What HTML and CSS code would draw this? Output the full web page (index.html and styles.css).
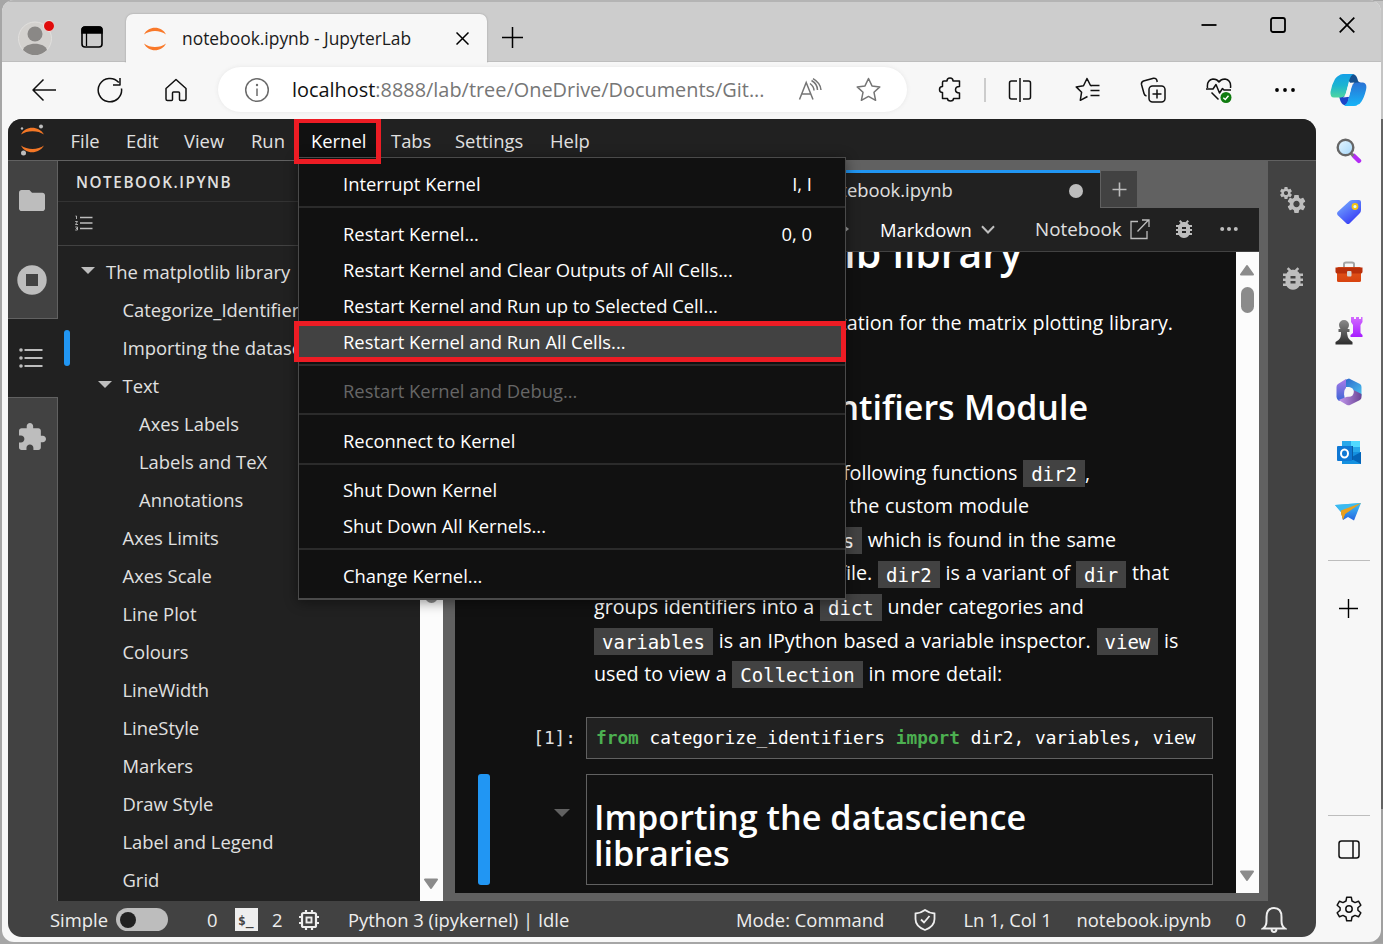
FILE: index.html
```html
<!DOCTYPE html>
<html lang="en">
<head>
<meta charset="utf-8">
<title>notebook.ipynb - JupyterLab</title>
<link rel="stylesheet" href="styles.css">
</head>
<body>
<svg width="0" height="0" class="defs" aria-hidden="true">
  <defs>
    <symbol id="gear" viewBox="2 2 20 20"><path d="M19.43 12.98c.04-.32.07-.64.07-.98s-.03-.66-.07-.98l2.11-1.65c.19-.15.24-.42.12-.64l-2-3.46c-.12-.22-.39-.3-.61-.22l-2.49 1c-.52-.4-1.08-.73-1.69-.98l-.38-2.65C14.46 2.18 14.25 2 14 2h-4c-.25 0-.46.18-.49.42l-.38 2.65c-.61.25-1.17.59-1.69.98l-2.49-1c-.23-.09-.49 0-.61.22l-2 3.46c-.13.22-.07.49.12.64l2.11 1.65c-.04.32-.07.65-.07.98s.03.66.07.98l-2.11 1.65c-.19.15-.24.42-.12.64l2 3.46c.12.22.39.3.61.22l2.49-1c.52.4 1.08.73 1.69.98l.38 2.65c.03.24.24.42.49.42h4c.25 0 .46-.18.49-.42l.38-2.65c.61-.25 1.17-.59 1.69-.98l2.49 1c.23.09.49 0 .61-.22l2-3.46c.12-.22.07-.49-.12-.64l-2.11-1.65zM12 15.5c-1.93 0-3.5-1.57-3.5-3.5s1.57-3.5 3.5-3.5 3.5 1.57 3.5 3.5-1.57 3.5-3.5 3.5z"/></symbol>
    <symbol id="bug" viewBox="4 3 16 18"><path d="M20 8h-2.81c-.45-.78-1.07-1.45-1.82-1.96L17 4.41 15.59 3l-2.17 2.17C12.96 5.06 12.49 5 12 5c-.49 0-.96.06-1.41.17L8.41 3 7 4.41l1.62 1.63C7.88 6.55 7.26 7.22 6.81 8H4v2h2.09c-.05.33-.09.66-.09 1v1H4v2h2v1c0 .34.04.67.09 1H4v2h2.81c1.04 1.79 2.97 3 5.19 3s4.15-1.21 5.19-3H20v-2h-2.09c.05-.33.09-.66.09-1v-1h2v-2h-2v-1c0-.34-.04-.67-.09-1H20V8zm-6 8h-4v-2h4v2zm0-4h-4v-2h4v2z"/></symbol>
    <linearGradient id="cpA" x1="0" y1="0" x2="0" y2="1"><stop offset="0" stop-color="#14a0e8"/><stop offset=".5" stop-color="#1cb5d0"/><stop offset="1" stop-color="#4fd6a0"/></linearGradient>
    <linearGradient id="cpB" x1="0" y1="0" x2="0" y2="1"><stop offset="0" stop-color="#2a72d4"/><stop offset="1" stop-color="#16b4f8"/></linearGradient>
    <linearGradient id="lens" x1="0" y1="0" x2="1" y2="1"><stop offset="0" stop-color="#e8f7ff"/><stop offset="1" stop-color="#a3d6fa"/></linearGradient>
    <linearGradient id="tag" x1="0" y1="0" x2=".7" y2="1"><stop offset="0" stop-color="#7db8ff"/><stop offset="1" stop-color="#3538f5"/></linearGradient>
    <linearGradient id="bag" x1="0" y1="0" x2="0" y2="1"><stop offset="0" stop-color="#e2561c"/><stop offset="1" stop-color="#d8430f"/></linearGradient>
    <linearGradient id="pawn" x1="0" y1="0" x2="0" y2="1"><stop offset="0" stop-color="#8a8a8a"/><stop offset="1" stop-color="#2c2c2c"/></linearGradient>
    <linearGradient id="rook" x1="0" y1="0" x2="0" y2="1"><stop offset="0" stop-color="#d36bff"/><stop offset="1" stop-color="#a61cff"/></linearGradient>
    <linearGradient id="m1" x1="0" y1="0" x2="1" y2="1"><stop offset="0" stop-color="#2a63c9"/><stop offset="1" stop-color="#4cc4f0"/></linearGradient>
    <linearGradient id="m2" x1="0" y1="0" x2="0" y2="1"><stop offset="0" stop-color="#ab7be8"/><stop offset="1" stop-color="#3a66d6"/></linearGradient>
    <linearGradient id="m3" x1="0" y1="0" x2="1" y2="0"><stop offset="0" stop-color="#c59af0"/><stop offset="1" stop-color="#6a4494"/></linearGradient>
    <linearGradient id="plane" x1="0" y1="0" x2="0" y2="1"><stop offset="0" stop-color="#3fc4f5"/><stop offset="1" stop-color="#2564e0"/></linearGradient>
  </defs>
</svg>
<div class="window">
  <header class="titlebar">
    <span class="avatar"><svg width="36" height="36" viewBox="0 0 36 36"><circle cx="17" cy="19.500" r="16.500" fill="#d3d1ce" stroke="#e0dfdd"/><circle cx="17" cy="15" r="7.500" fill="#8a8886"/><path d="M5 31C7 22.500 27 22.500 29 31C22 38 12 38 5 31Z" fill="#8a8886"/><circle cx="31" cy="7" r="5.500" fill="#e00b0b" stroke="#e8e8e8"/></svg></span>
    <span class="workspaces"><svg width="22" height="22" viewBox="0 0 22 22"><rect x="1" y="1" width="20" height="20" rx="3" fill="none" stroke="#000" stroke-width="1.600"/><path d="M1 7V3.500Q1 1 4 1H18Q21 1 21 3.500V7ZM5.500 7V20" stroke="#000" stroke-width="1.300"/></svg></span>
    <div class="browser-tab">
      <svg class="favicon" width="24" height="24" viewBox="0 0 24 24" fill="#f9792a"><path d="M1 7.500C5-1.500 19-1.500 23 7.500C17 2.800 7 2.800 1 7.500ZM1 16.500C5 25.500 19 25.500 23 16.500C17 21.200 7 21.200 1 16.500Z"/></svg>
      <span class="tab-name">notebook.ipynb - JupyterLab</span>
      <svg width="13" height="13" viewBox="0 0 13 13"><path d="M.5.500 12.500 12.500M12.500.500.500 12.500" stroke="#000" stroke-width="1.500"/></svg>
    </div>
    <svg class="new-tab" width="21" height="21" viewBox="0 0 21 21"><path d="M10.500 0V21M0 10.500H21" stroke="#000" stroke-width="1.500"/></svg>
    <div class="window-buttons">
      <svg width="16" height="16" viewBox="0 0 16 16"><path d="M.5 8H15.500" stroke="#000" stroke-width="1.800"/></svg>
      <svg width="16" height="16" viewBox="0 0 16 16"><rect x="1" y="1" width="14" height="14" rx="2" fill="none" stroke="#000" stroke-width="1.800"/></svg>
      <svg width="16" height="16" viewBox="0 0 16 16"><path d="M.7.700 15.300 15.300M15.300.700.700 15.300" stroke="#000" stroke-width="1.700"/></svg>
    </div>
  </header>

  <nav class="toolbar">
    <span class="slot"><svg width="26" height="24" viewBox="0 0 26 24"><path d="M25 12H2M12.500 1.500 2 12 12.500 22.500" class="ln"/></svg></span>
    <span class="slot"><svg width="26" height="26" viewBox="0 0 26 26"><path d="M24.500 11.500A11.700 11.700 0 1 1 21.800 5.500M23 1V8H16" class="ln"/></svg></span>
    <span class="slot"><svg width="24" height="24" viewBox="0 0 24 24"><path d="M2 10.500 12 1.500 22 10.500V21Q22 22.500 20.500 22.500H16.500Q15.500 22.500 15.500 21.500V15Q15.500 14 14.500 14H9.500Q8.500 14 8.500 15V21.500Q8.500 22.500 7.500 22.500H3.500Q2 22.500 2 21Z" class="ln"/></svg></span>
    <div class="address">
      <svg width="26" height="26" viewBox="0 0 26 26"><g fill="none" stroke="#6b6b6b" stroke-width="1.500"><circle cx="13" cy="13" r="11.300"/><path d="M13 11.500V19"/></g><circle cx="13" cy="8" r="1.200" fill="#6b6b6b"/></svg>
      <span class="url"><b>localhost</b>:8888/lab/tree/OneDrive/Documents/Git...</span>
      <svg class="read" width="24" height="23" viewBox="0 0 24 23"><g fill="none" stroke="#757575" stroke-width="1.500"><path d="M1.500 21.500 8.200 4.500 15 21.500M4 16H12.500M12 5.500Q16 8.500 16 12.500M13.500 2.500Q19.500 6 19.500 12M15 .7Q22.500 5 23 12"/></g></svg>
      <svg class="star" width="25" height="25" viewBox="0 0 25 25"><path d="M12.500 1.500 16 8.900 23.800 9.900 18 15.300 19.600 23.300 12.500 19.400 5.400 23.300 7 15.300 1.200 9.900 9 8.900Z" fill="none" stroke="#757575" stroke-width="1.500" stroke-linejoin="round"/></svg>
    </div>
    <span class="slot"><svg width="24" height="25" viewBox="0 0 24 25"><path d="M6 4H9Q9 1 12 1T15 4H21.500V9.500Q17.500 9.500 17.500 12.700T21.500 16V21.500H15.500Q15.500 24 12.500 24T9.500 21.500H4.500V15.500Q1.500 15.500 1.500 12.500T4.500 9.500V5.500Q4.500 4 6 4Z" class="ln"/></svg></span>
    <i class="divider"></i>
    <span class="slot"><svg width="24" height="24" viewBox="0 0 24 24"><path d="M9 3H3.500Q1.500 3 1.500 5V19Q1.500 21 3.500 21H9M15 3H20.500Q22.500 3 22.500 5V19Q22.500 21 20.500 21H15M12 0V24" class="ln"/></svg></span>
    <span class="slot after"><svg width="25" height="25" viewBox="0 0 25 25"><path d="M17 8.800 15.500 8.500 12 1.500 8.500 8.800 1.200 9.900 6.600 15.200 5.300 23.300 12.500 19.500M15.500 8.500H24.500M15.500 13.500H24.500M15.500 18.500H24.500" class="ln"/></svg></span>
    <span class="slot"><svg width="26" height="26" viewBox="0 0 26 26"><path d="M6.500 19Q4.500 18.500 4 16.500L1.500 7.500Q1 5 3.500 4L13.500 1.300Q16 1 16.800 3L17.200 5" class="ln"/><rect x="9" y="9" width="16" height="16" rx="3.500" class="ln"/><path d="M17 12.500V21.500M12.500 17H21.500" class="ln"/></svg></span>
    <span class="slot"><svg width="26" height="26" viewBox="0 0 26 26"><path d="M1.500 11Q.5 3 7 2Q11 2 13 5Q15 2 19 2Q25.500 3 24.500 11M0 12H7L10 7.500 13.500 16 16.500 11.500 18 13H25M5.500 15.500 12.500 22.500" class="ln"/><circle cx="20" cy="20.500" r="5.500" fill="#107c10"/><path d="M17.300 20.700 19.300 22.500 22.500 18.800" fill="none" stroke="#fff" stroke-width="1.400"/></svg></span>
    <span class="slot"><svg width="22" height="6" viewBox="0 0 22 6"><circle cx="3" cy="3" r="1.900"/><circle cx="11" cy="3" r="1.900"/><circle cx="19" cy="3" r="1.900"/></svg></span>
    <span class="copilot"><svg width="37" height="34" viewBox="0 0 37 34"><path d="M20 1H22Q26 1 27.500 6Q28 9.500 31 9.500L22 12 18 7Z" fill="#15508f"/><path d="M9 22 19 24Q18 33 14 32Q11 31 9.500 25Z" fill="#1b45c8"/><path d="M9 2.500Q10 1 13 1H24Q20.500 2 19 8L16 20Q15 24 11 24.500H4Q0 24.500 .500 19Q1.500 12 5 6Q7 3 9 2.500Z" fill="url(#cpA)"/><path d="M28 31.500Q26.500 33 24 33H14Q17 31 18.500 26L21.500 14Q23 9.500 27 9.500H33Q37.500 10.500 36 17Q34 25 31.500 28.500Q30 31 28 31.500Z" fill="url(#cpB)"/><path d="M18.800 10.500Q20 9.500 24.500 9.500Q22.300 11 21.500 14L19.500 22Q18.500 24.500 13 24.500Q15.500 23 16 20Z" fill="#f7f7f7"/></svg></span>
  </nav>

  <div class="page">
    <main class="lab">
      <nav class="menubar">
        <span class="logo"><svg width="28" height="34" viewBox="0 0 28 34"><path d="M2 11.500C6 2.500 20 2.500 25 11.500C19 7 8 7 2 11.500ZM2 22.500C6 31.500 20 31.500 25 22.500C19 27 8 27 2 22.500Z" fill="#f37726"/><circle cx="22" cy="3.500" r="2" fill="#bdbdbd"/><circle cx="3" cy="5.500" r="1.200" fill="#bdbdbd"/><circle cx="4.500" cy="30" r="2.500" fill="#bdbdbd"/></svg></span>
        <span>File</span><span>Edit</span><span>View</span><span>Run</span>
        <div class="kernel">Kernel
          <i class="mark mark-menu"></i>
          <div class="dropdown">
            <p>Interrupt Kernel<kbd>I, I</kbd></p>
            <hr>
            <p>Restart Kernel...<kbd>0, 0</kbd></p>
            <p>Restart Kernel and Clear Outputs of All Cells...</p>
            <p>Restart Kernel and Run up to Selected Cell...</p>
            <p class="hot">Restart Kernel and Run All Cells...<i class="mark mark-item"></i></p>
            <hr>
            <p class="off">Restart Kernel and Debug...</p>
            <hr>
            <p>Reconnect to Kernel</p>
            <hr>
            <p>Shut Down Kernel</p>
            <p>Shut Down All Kernels...</p>
            <hr>
            <p>Change Kernel...</p>
          </div>
        </div>
        <span>Tabs</span><span>Settings</span><span>Help</span>
      </nav>

      <div class="workbench">
        <aside class="activity">
          <span><svg width="26" height="21" viewBox="2 4 20 16" preserveAspectRatio="none"><path d="M10 4H4c-1.100 0-1.990.900-1.990 2L2 18c0 1.100.900 2 2 2h16c1.100 0 2-.900 2-2V8c0-1.100-.900-2-2-2h-8l-2-2z"/></svg></span>
          <span><svg width="30" height="30" viewBox="0 0 30 30"><circle cx="15" cy="15" r="14.700"/><path d="M9 9H21V21H9Z" fill="#424242"/></svg></span>
          <span class="active"><svg width="24" height="20" viewBox="0 0 24 20"><path d="M5.500 1H23.500V3H5.500ZM5.500 9H23.500V11H5.500ZM5.500 17H23.500V19H5.500Z"/><circle cx="2" cy="2" r="1.800"/><circle cx="2" cy="10" r="1.800"/><circle cx="2" cy="18" r="1.800"/></svg></span>
          <span><svg width="27" height="27" viewBox="2 1 21 21"><path d="M20.500 11H19V7c0-1.100-.900-2-2-2h-4V3.500C13 2.120 11.880 1 10.500 1S8 2.120 8 3.500V5H4c-1.100 0-1.990.900-1.990 2v3.800H3.500c1.490 0 2.700 1.210 2.700 2.700s-1.210 2.700-2.700 2.700H2V20c0 1.100.900 2 2 2h3.800v-1.500c0-1.490 1.210-2.700 2.700-2.700 1.490 0 2.700 1.210 2.700 2.700V22H17c1.100 0 2-.900 2-2v-4h1.500c1.380 0 2.500-1.120 2.500-2.500S21.880 11 20.500 11z"/></svg></span>
        </aside>
        <section class="toc">
          <h2>NOTEBOOK.IPYNB</h2>
          <div class="toc-tools"><svg width="18" height="16" viewBox="0 0 18 16" fill="none" stroke="#bdbdbd"><path d="M5 2.500H17.500M5 8H17.500M5 13.500H17.500" stroke-width="1.700"/><path d="M.5 1H1.500V4M.2 6.500H2.500L.5 9.500H3M.2 12H2.500V15H.200M1 13.500H2.500" stroke-width=".9"/></svg></div>
          <div class="toc-body">
            <ul>
              <li class="l0"><i class="caret"></i>The matplotlib library</li>
              <li class="l1">Categorize_Identifiers Module</li>
              <li class="l1 current">Importing the datascience libraries</li>
              <li class="l1"><i class="caret"></i>Text</li>
              <li class="l2">Axes Labels</li>
              <li class="l2">Labels and TeX</li>
              <li class="l2">Annotations</li>
              <li class="l1">Axes Limits</li>
              <li class="l1">Axes Scale</li>
              <li class="l1">Line Plot</li>
              <li class="l1">Colours</li>
              <li class="l1">LineWidth</li>
              <li class="l1">LineStyle</li>
              <li class="l1">Markers</li>
              <li class="l1">Draw Style</li>
              <li class="l1">Label and Legend</li>
              <li class="l1">Grid</li>
            </ul>
            <div class="scroll toc-scroll"><i class="thumb"></i><svg width="16" height="12" viewBox="0 0 16 12"><path d="M2 1.500H14L8 10Z" stroke="#8b8b8b" stroke-width="2" stroke-linejoin="round"/></svg></div>
          </div>
        </section>

        <section class="dock">
          <div class="doc-tabs">
            <div class="doc-tab"><span>notebook.ipynb</span><i></i></div>
            <div class="add"><svg width="15" height="15" viewBox="0 0 15 15"><path d="M7.500.500V14.500M.5 7.500H14.500" stroke="#bdbdbd" stroke-width="1.600"/></svg></div>
          </div>
          <div class="doc-tools">
            <svg class="run-all" width="7" height="8" viewBox="0 0 7 8"><path d="M1 0 6 4 1 8Z" fill="#9e9e9e"/></svg>
            <span class="cell-type">Markdown</span>
            <svg class="chev" width="14" height="9" viewBox="0 0 14 9"><path d="M1 1.200 7 7.500 13 1.200" fill="none" stroke="#bdbdbd" stroke-width="2"/></svg>
            <span class="open-nb">Notebook</span>
            <svg class="ext" width="21" height="21" viewBox="0 0 21 21"><path d="M9 2.500H2V19.500H18V12M8.500 12.500 19.500 1M13 1H20V8" fill="none" stroke="#bdbdbd" stroke-width="1.300"/></svg>
            <svg class="bug" width="16" height="18" fill="#bdbdbd"><use href="#bug"/></svg>
            <svg class="more" width="18" height="6" viewBox="0 0 18 6" fill="#bdbdbd"><circle cx="2.200" cy="3" r="2"/><circle cx="9" cy="3" r="2"/><circle cx="15.800" cy="3" r="2"/></svg>
          </div>
          <div class="doc-body">
            <article>
              <div class="rendered">
                <h1 class="w428">The matplotlib library</h1>
                <p class="w579 intro">documentation for the matrix plotting library.</p>
                <h3 class="w494">Categorize_Identifiers Module</h3>
                <p class="w496">The following functions <code>dir2</code>,</p>
                <p class="w435">from the custom module</p>
                <p class="w522"><code>identifiers</code> which is found in the same</p>
                <p class="w575">as this file. <code>dir2</code> is a variant of <code>dir</code> that</p>
                <p>groups identifiers into a <code>dict</code> under categories and</p>
                <p><code>variables</code> is an IPython based a variable inspector. <code>view</code> is</p>
                <p>used to view a <code>Collection</code> in more detail:</p>
              </div>
              <div class="cell">
                <span class="prompt">[1]:</span>
                <pre><b>from</b> categorize_identifiers <b>import</b> dir2, variables, view</pre>
              </div>
              <div class="cell selected">
                <i class="bar"></i>
                <span class="prompt"><i class="caret"></i></span>
                <h3>Importing the datascience<br>libraries</h3>
              </div>
            </article>
            <div class="scroll doc-scroll">
              <svg width="16" height="12" viewBox="0 0 16 12"><path d="M2 10.500H14L8 2Z" stroke="#8b8b8b" stroke-width="2" stroke-linejoin="round"/></svg>
              <i class="thumb"></i>
              <svg class="down" width="16" height="12" viewBox="0 0 16 12"><path d="M2 1.500H14L8 10Z" stroke="#8b8b8b" stroke-width="2" stroke-linejoin="round"/></svg>
            </div>
          </div>
        </section>
        <aside class="inspector">
          <svg width="26" height="26" viewBox="0 0 26 26"><use href="#gear" x="0" y="0" width="12" height="12"/><use href="#gear" x="7.500" y="8" width="18" height="18"/></svg>
          <svg width="20" height="23"><use href="#bug"/></svg>
        </aside>
      </div>

      <footer class="status">
        <span>Simple</span>
        <i class="toggle"></i>
        <span>0</span>
        <svg width="23" height="23" viewBox="0 0 23 23"><path d="M0 0H23V23H0Z" fill="#eee"/><text x="3" y="17" class="term">$_</text></svg>
        <span>2</span>
        <svg width="22" height="22" viewBox="0 0 22 22" fill="none" stroke="#eee"><rect x="4" y="4" width="14" height="14" rx="1.500" stroke-width="2.200"/><rect x="8.500" y="8.500" width="5" height="5" stroke-width="1.900"/><path d="M8 1V4M14 1V4M8 18V21M14 18V21M1 8H4M1 14H4M18 8H21M18 14H21" stroke-width="2.200"/></svg>
        <span>Python 3 (ipykernel) | Idle</span>
        <span>Mode: Command</span>
        <svg width="22" height="22" viewBox="0 0 22 22" fill="none" stroke="#eee" stroke-width="1.800"><path d="M11 1Q15 4 20.500 4.500V10Q20.500 17.500 11 21Q1.500 17.500 1.500 10V4.500Q7 4 11 1Z"/><path d="M7 10.500 10 13.500 15.500 7"/></svg>
        <span>Ln 1, Col 1</span>
        <span>notebook.ipynb</span>
        <span>0</span>
        <svg width="26" height="28" viewBox="0 0 26 28" fill="none" stroke="#eee" stroke-width="2"><path d="M2 22.500Q5.500 20 5.500 15V11Q5.500 2 13 2T20.500 11V15Q20.500 20 24 22.500ZM10.500 23.500Q11 26 13 26T15.500 23.500"/></svg>
      </footer>
    </main>

    <aside class="edgebar">
      <svg width="26" height="26" viewBox="0 0 26 26"><path d="M18 18 23 22.800" stroke="#b32cf5" stroke-width="4.500" stroke-linecap="round"/><path d="M15 15.500 17.500 18" stroke="#777" stroke-width="3"/><circle cx="9.500" cy="9.500" r="7.800" fill="url(#lens)" stroke="#666" stroke-width="2.400"/></svg>
      <svg width="26" height="26" viewBox="0 0 26 26"><path d="M13 2.500Q14 1 16 1H23Q25 1 25 3V11Q25 13 23.500 14.500L13.500 24.500Q12 25.500 10.500 24.500L1.500 16Q.500 14.500 1.500 13Z" fill="url(#tag)"/><circle cx="19" cy="7.500" r="2.500" fill="#dff" stroke="#f5c211" stroke-width="1.800"/></svg>
      <svg width="28" height="22" viewBox="0 0 28 22"><path d="M9 7V3Q9 1.500 11 1.500H17Q19 1.500 19 3V7" fill="none" stroke="#a5a5a5" stroke-width="2"/><rect x="2" y="6" width="24" height="15" rx="1.500" fill="url(#bag)"/><path d="M.5 6.500H27.500V11Q27.500 12.500 25 12.500H3Q.500 12.500 .500 11Z" fill="#b92f0a"/><rect x="12" y="10" width="4.500" height="5.500" rx="1" fill="#d5d5d5"/></svg>
      <svg width="28" height="28" viewBox="0 0 28 28"><path d="M16 0H19V2H21V0H24V2H26V0H27.500V5L25.500 8V16L27.500 18V20H15.500V18L18 16V8L16 5Z" fill="url(#rook)"/><path d="M9 3A5 5 0 0 1 14 8Q14 10 12.500 12H14.500V15H12Q12 20 15 23L17.500 25V27.500H.500V25L3.500 23Q6.500 20 6 15H3.500V12H5.500Q4 10 4 8A5 5 0 0 1 9 3Z" fill="url(#pawn)"/></svg>
      <svg width="26" height="28" viewBox="0 0 26 28"><path d="M9 2 13 .500 24 6Q25.500 7 25.500 9V18L18 13 13 9H8Z" fill="url(#m1)"/><path d="M10 1V11L8 16 9 22 3 23Q.500 21 .500 19V9Q.500 7 2 6Z" fill="url(#m2)"/><path d="M25.500 16V19Q25.500 21 24 22L14 27Q13 27.500 11 27L2.500 22 13 18Q17 18 17.500 12Z" fill="url(#m3)"/><circle cx="13" cy="14" r="4.800" fill="#f7f7f7"/></svg>
      <svg width="26" height="26" viewBox="0 0 26 26"><path d="M6 1H24V13H6Z" fill="#28a8ea"/><path d="M15 1H24V7H15Z" fill="#50d9ff"/><path d="M6 12H25V24H6Z" fill="#1490df"/><path d="M25 12V24L14 18Z" fill="#0364b8"/><path d="M4 6H17V20H7Z" fill="#0a5ca5"/><rect x="1" y="6" width="15" height="15" rx="1" fill="#0f78d4"/><ellipse cx="8.500" cy="13.500" rx="3.500" ry="4" fill="none" stroke="#fff" stroke-width="2"/></svg>
      <svg width="27" height="20" viewBox="0 0 27 20"><path d="M0 3 26 1 19 18.500 13 15 8 18 6 10Z" fill="url(#plane)"/><path d="M6 10 26 1 10 12 8 18Z" fill="#e29618"/><path d="M0 3 26 1 6 10Z" fill="#3cbaf0"/><path d="M26 1 6 8.500V11.500L8 17 10 12Z" fill="#e8a020"/></svg>
      <hr>
      <svg width="19" height="19" viewBox="0 0 19 19"><path d="M9.500 0V19M0 9.500H19" stroke="#000" stroke-width="1.400"/></svg>
      <hr class="low">
      <svg width="22" height="19" viewBox="0 0 22 19"><path d="M3.500 1H18.500Q21 1 21 3.500V15.500Q21 18 18.500 18H3.500Q1 18 1 15.500V3.500Q1 1 3.500 1ZM15 1V18" class="ln"/></svg>
      <svg width="26" height="26" viewBox="0 0 26 26"><path d="M10.700 1.200H15.300L16 5L19 6.600L22.500 5.200L24.800 9.200L21.900 11.800V14.200L24.800 16.800L22.500 20.800L19 19.400L16 21L15.300 24.800H10.700L10 21L7 19.400L3.500 20.800L1.200 16.800L4.100 14.200V11.800L1.200 9.200L3.500 5.200L7 6.600L10 5Z" class="ln"/><circle cx="13" cy="13" r="3.200" class="ln"/></svg>
    </aside>
  </div>
</div>
</body>
</html>
```

FILE: styles.css
```css
* { box-sizing: border-box; }
body {
  margin: 0;
  width: 1383px;
  height: 944px;
  overflow: hidden;
  padding: 0 2px 2px;
  background: linear-gradient(#c4c4c4 0 118px, #636363 118px 808px, #a0a0a0 808px) right / 10px 942px no-repeat, #a6a6a6;
  font-family: "Open Sans", "Noto Sans", sans-serif;
  font-size: 18.4px;
  color: #e0e0e0;
}
.defs { position: absolute; }
p, h1, h2, h3, ul, pre, hr { margin: 0; padding: 0; }
svg { display: block; flex: none; }
i { display: block; flex: none; }
.ln { fill: none; stroke: #111; stroke-width: 1.5; stroke-linejoin: round; }

.window { height: 942px; border-radius: 12px; overflow: hidden; background: #f7f7f7; color: #e0e0e0; }

/* browser chrome */
.titlebar {
  display: flex;
  height: 62px;
  background: #cdcdcd;
  border-top: 2px solid #b4b4b4;
  border-bottom: 1px solid #bebebe;
}
.avatar { padding: 17px 0 0 16px; width: 79px; }
.workspaces { padding-top: 24px; width: 45px; }
.browser-tab {
  display: flex;
  align-items: center;
  width: 361px;
  height: 49px;
  margin-top: 12px;
  padding-left: 17px;
  background: #f7f7f7;
  border-radius: 7px 7px 0 0;
  box-shadow: 0 0 2px #999;
  color: #1b1b1b;
  clip-path: inset(-3px -3px 0 -3px);
}
.tab-name { flex: none; width: 289px; padding: 0 0 2px 15px; font-size: 17.4px; white-space: nowrap; }
.new-tab { margin: 25px 0 0 15px; }
.window-buttons { display: flex; gap: 53px; margin: 15px 0 0 678px; }

.toolbar { display: flex; align-items: center; height: 57px; padding: 0 0 2px 9px; }
.slot { display: flex; justify-content: center; flex: none; width: 66px; }
.after { margin-left: 1px; }
.address {
  display: flex;
  flex: none;
  align-items: center;
  width: 689px;
  height: 45px;
  margin: 0 10px 0 9px;
  padding-left: 26px;
  border-radius: 23px;
  background: #fff;
  box-shadow: 0 0 4px #e6e6e6;
}
.url { flex: none; width: 528px; padding-left: 22px; font-size: 19.9px; white-space: nowrap; color: #767676; }
.url b { font-weight: 400; color: #111; }
.star { margin-left: 34px; }
.divider { width: 2px; height: 24px; margin: 0 1px 0 1px; background: #ccc; }
.copilot { margin-left: 12px; }

.page { display: flex; height: 823px; padding-left: 6px; }

/* JupyterLab */
.lab { width: 1308px; height: 818px; border-radius: 14px; overflow: hidden; background: #424242; }
.menubar {
  display: grid;
  grid-template-columns: 62.5px 55.5px 58px 67px 47px 93px 64px 95px 80px;
  height: 42px;
  line-height: 43px;
  background: #212121;
  border-bottom: 1px solid #616161;
}
.logo { padding: 4px 0 0 11px; }
.kernel { position: relative; height: 41px; padding-left: 13px; background: #111; margin-right: 10px; color: #fff; }
.mark { position: absolute; border: 5px solid #ed1c24; }
.mark-menu { left: -4px; top: -1px; width: 87px; height: 46px; z-index: 3; }
.mark-item { left: -5px; top: -3px; width: 552px; height: 41px; }
.dropdown {
  position: absolute;
  z-index: 2;
  left: 0;
  top: 38px;
  width: 548px;
  height: 443px;
  padding-top: 8px;
  border: 1px solid #4a4a4a;
  border-bottom-width: 2px;
  background: #111;
  box-shadow: 0 2px 12px rgba(0,0,0,.45);
  line-height: 36px;
}
.dropdown p { position: relative; display: flex; justify-content: space-between; height: 36px; padding: 0 33px 0 44px; white-space: nowrap; }
.dropdown kbd { font: inherit; }
.dropdown hr { height: 2px; margin: 4px 0 7.5px; border: 0; background: #2b2b2b; }
.dropdown .hot { background: #424242; }
.dropdown .off { color: #666; }

.workbench { display: flex; height: 740px; }
.activity { width: 50px; border-right: 1px solid #616161; }
.activity svg { fill: #bdbdbd; }
.activity span { display: flex; align-items: center; justify-content: center; height: 79px; padding-right: 1px; }
.activity .active { width: 50px; height: 80px; margin: -1px 0 -1px; padding-right: 4px; background: #212121; border: 1px solid #616161; border-width: 1px 0; }

.toc { width: 385px; background: #212121; }
.toc h2 { height: 41px; padding-left: 18px; border-bottom: 1px solid #333; font-size: 15.3px; font-weight: 600; letter-spacing: 1.55px; line-height: 42px; }
.toc-tools { height: 44px; padding: 13px 17px; border-bottom: 1px solid #424242; }
.toc-body { display: flex; height: 655px; }
.toc ul { width: 362px; padding-top: 7px; list-style: none; }
.toc li { position: relative; height: 38px; line-height: 38px; white-space: nowrap; overflow: hidden; }
.toc .l0 { padding-left: 48px; }
.toc .l1 { padding-left: 64.5px; }
.toc .l2 { padding-left: 81px; }
.caret { width: 0; height: 0; border: 7px solid transparent; border-top-color: #bdbdbd; border-bottom: 0; }
li .caret { float: left; margin: 14px 0 0 -25px; }
.current::before { content: ""; position: absolute; left: 6px; top: 1px; width: 6px; height: 36px; border-radius: 3px; background: #2196f3; }
.scroll { width: 23px; background: #fcfcfc; fill: #8b8b8b; }
.scroll svg { margin: auto 3px; }
.thumb { width: 13px; margin: 0 5px; border-radius: 7px; background: #8b8b8b; }
.toc-scroll .thumb { height: 335px; margin-top: 22px; }
.toc-scroll svg { margin-top: 275px; }

.dock { width: 825px; padding: 9px 9px 8px 12px; background: #616161; }
.doc-tabs { display: flex; height: 38px; }
.doc-tab { display: flex; align-items: center; width: 645px; border-top: 3px solid #2196f3; background: #212121; }
.doc-tab span { width: 614px; padding: 0 0 2px 363px; }
.doc-tab i { width: 14px; height: 14px; border-radius: 50%; background: #bdbdbd; }
.add { display: grid; place-items: center; width: 36px; height: 36px; margin: 1px 0 0 1px; background: #424242; }
.doc-tools { display: flex; align-items: center; height: 44px; padding-bottom: 1px; background: #212121; border-bottom: 1px solid #424242; }
.run-all { margin-left: 388px; }
.cell-type { width: 101px; margin-left: 30px; color: #fff; }
.open-nb { width: 94px; margin-left: 40px; font-size: 18.8px; }
.bug { margin-left: 26px; }
.more { margin-left: 28px; }
.doc-body { display: flex; height: 641px; background: #111; color: #fff; }
article { width: 781px; height: 641px; overflow: hidden; }
.rendered { height: 465px; margin-left: 139px; font-size: 19.7px; word-spacing: .6px; white-space: nowrap; display: flow-root; }
.rendered p { height: 33.6px; line-height: 33.6px; }
h1 { margin-top: -22px; height: 44px; line-height: 44px; font-size: 41px; font-weight: 600; }
h3 { font-size: 34.2px; font-weight: 600; line-height: 36px; }
.rendered .intro { margin-top: 32px; }
.rendered h3 { height: 36px; margin: 49px 0 31px; font-size: 34px; }
/* line measures */
.w428, .w579, .w494, .w496, .w435, .w522, .w575 { display: flex; justify-content: flex-end; white-space: pre; }
.w428 { width: 428px; }
.w579 { width: 579px; }
.w494 { width: 494px; }
.w496 { width: 496px; }
.w435 { width: 435px; }
.w522 { width: 522px; }
.w575 { width: 575px; }
code { display: inline-block; height: 27px; padding: 0 8px; background: #424242; font: 19px/29px "DejaVu Sans Mono", monospace; vertical-align: -1px; }
.rendered p[class] code { align-self: center; margin-top: 2px; }
.cell { position: relative; display: flex; height: 42px; margin-bottom: 15px; }
.prompt { width: 131px; padding-right: 10px; text-align: right; font: 17.8px/42px "DejaVu Sans Mono", monospace; color: #e0e0e0; }
pre { width: 627px; height: 42px; padding-left: 9px; border: 1px solid #616161; background: #212121; font: 17.8px/40px "DejaVu Sans Mono", monospace; }
pre b { color: #4caf50; }
.selected { height: 111px; }
.bar { width: 12px; margin-left: 23px; border-radius: 3px; background: #2196f3; }
.selected .prompt { width: 96px; padding: 35px 0 0 64px; }
.selected .caret { border-width: 8px 8px 0; border-top-color: #616161; }
.selected h3 { width: 627px; padding: 24px 0 0 7px; border: 1px solid #616161; }
.doc-scroll { height: 641px; padding-top: 12px; }
.doc-scroll .thumb { height: 26px; margin-top: 11px; }
.doc-scroll svg.down { margin-top: 557px; }

.inspector { display: flex; flex-direction: column; align-items: center; gap: 54px; width: 48px; padding: 26px 0 0 2px; fill: #bdbdbd; }

.status {
  display: grid;
  grid-template-columns: 66px 91px 28px 37px 26px 50px 388px 177.5px 50px 113px 159px 25px 30px;
  align-items: center;
  height: 36px;
  padding: 1px 0 0 42px;
  color: #eee;
  white-space: nowrap;
}
.toggle { width: 52px; height: 23px; border-radius: 12px; background: #bdbdbd; }
.toggle::before { content: ""; display: block; width: 16px; height: 16px; margin: 3.5px; border-radius: 50%; background: #212121; float: left; }
.term { font: 700 13px "DejaVu Sans Mono", monospace; fill: #424242; }

/* Edge sidebar */
.edgebar { display: flex; flex-direction: column; align-items: center; width: 65px; padding-top: 19px; }
.edgebar svg { margin-bottom: 34px; }
.edgebar svg:nth-child(1) { margin-bottom: 35px; }
.edgebar svg:nth-child(2) { margin-bottom: 36px; }
.edgebar svg:nth-child(4) { margin-bottom: 33px; }
.edgebar svg:nth-child(6) { margin-bottom: 36px; }
.edgebar svg:nth-child(7) { margin-bottom: 38px; }
.edgebar hr { flex: none; width: 42px; height: 1px; border: 0; background: #bdbdbd; margin-bottom: 38px; }
.edgebar hr.low { margin: 163px 0 24px; }
.edgebar hr.low + svg { margin-bottom: 37px; }
```
